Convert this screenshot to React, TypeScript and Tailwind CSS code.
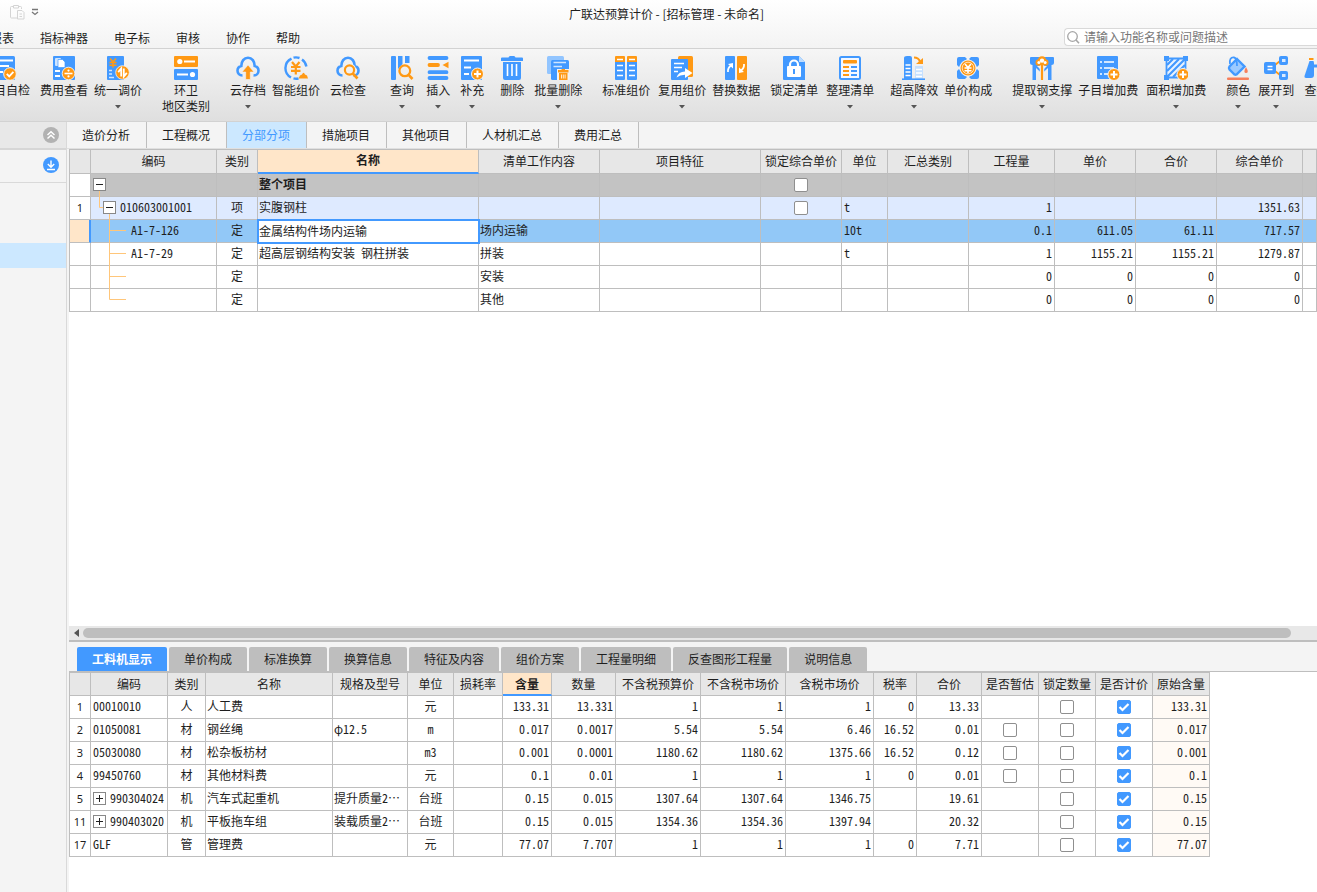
import React from "react";

const BLUE = "#4299ff";
const ORANGE = "#ff9914";

function Svg({ children }: { children: React.ReactNode }) {
  return (
    <svg width="24" height="24" viewBox="0 0 24 24" fill="none" className="shrink-0" aria-hidden="true">
      {children}
    </svg>
  );
}

function Yen({ x, y, color }: { x: number; y: number; color: string }) {
  return (
    <path
      transform={`translate(${x} ${y})`}
      d="M1 0 L4 3.5 L7 0 M4 3.5 V9 M0.5 4 H7.5 M0.5 6.8 H7.5"
      stroke={color}
      strokeWidth="1.6"
    />
  );
}

function PlusBadge({ x, y }: { x: number; y: number }) {
  return (
    <g>
      <circle cx={x} cy={y} r="6" fill={ORANGE} stroke="#f4f4f4" strokeWidth="1" />
      <path d={`M${x - 3.5} ${y}h7M${x} ${y - 3.5}v7`} stroke="#fff" strokeWidth="2" />
    </g>
  );
}

const CLOUD = "M6.5 19.5C3.5 19.5 1.5 17.3 1.5 14.7C1.5 12 3.3 10.4 5.3 10C5.3 5.5 8 1.7 12 1.7C16 1.7 18.7 5.5 18.7 10C20.7 10.4 22.5 12 22.5 14.7C22.5 17.3 20.5 19.5 17.5 19.5";

const icons: Record<string, React.ReactNode> = {
  selfCheck: (
    <Svg>
      <rect x="0" y="0" width="21" height="24" rx="1.5" fill={BLUE} />
      <path d="M3 4.5H19M3 10H15M3 16H9" stroke="#fff" strokeWidth="2" />
      <circle cx="16" cy="18" r="6.3" fill={ORANGE} stroke="#f4f4f4" />
      <path d="M12.8 17.8l2.4 2.6 4.2-4.6" stroke="#fff" strokeWidth="1.8" />
    </Svg>
  ),
  feeView: (
    <Svg>
      <rect x="1" y="0" width="22" height="24" rx="1" fill={BLUE} />
      <rect x="3" y="2" width="6" height="8" rx="1" fill="#cfe5ff" />
      <path d="M6 3.5h4.5l2.5 2.5v5.5H6z" fill="#fff" stroke={BLUE} strokeWidth=".7" />
      <path d="M3 15H8M3 20H8" stroke="#fff" strokeWidth="1.8" />
      <circle cx="16.5" cy="17.5" r="6.3" fill={ORANGE} stroke="#fff" strokeWidth=".8" />
      <path d="M12.5 17.5h8" stroke="#fff" strokeWidth="1.6" />
      <circle cx="16.5" cy="14.6" r="1.1" fill="#fff" />
      <circle cx="16.5" cy="20.4" r="1.1" fill="#fff" />
    </Svg>
  ),
  adjust: (
    <Svg>
      <rect x="1" y="0" width="17" height="24" rx="1" fill={BLUE} />
      <Yen x={3} y={2.5} color={ORANGE} />
      <path d="M3 14.5h3M3 18h3M3 21.5h5" stroke="#cfe5ff" strokeWidth="1.3" />
      <circle cx="16.5" cy="16.5" r="6.8" fill={ORANGE} stroke="#f4f4f4" strokeWidth=".8" />
      <path d="M15.2 20.5v-8l-3 3.6M17.8 12.5v8l3-3.6" stroke="#fff" strokeWidth="1.8" />
    </Svg>
  ),
  region: (
    <Svg>
      <rect width="24" height="11" rx="1" fill={ORANGE} />
      <rect y="13" width="24" height="11" rx="1" fill={BLUE} />
      <circle cx="5.8" cy="5.5" r="2.6" fill="#fff" />
      <path d="M10 5.5H21M3 18.5H14" stroke="#fff" strokeWidth="1.8" />
      <circle cx="18.5" cy="18.5" r="2.6" fill="#fff" />
    </Svg>
  ),
  cloudSave: (
    <Svg>
      <path d={CLOUD} stroke={BLUE} strokeWidth="2.6" />
      <path d="M12 9L18 16H14.3V23.5H9.7V16H6Z" fill={ORANGE} stroke="#f2f2f2" strokeWidth=".6" />
    </Svg>
  ),
  smart: (
    <Svg>
      <path d="M7 21.5A10.6 10.6 0 0 1 7.5 2.6M9.5 1.7A10.6 10.6 0 0 1 15.5 2M18 3.4A10.6 10.6 0 0 1 22.4 10.5M9.5 22.4a10.6 10.6 0 0 0 5 .1" stroke={BLUE} strokeWidth="2.4" />
      <path d="M8 6l3.8 4.500L15.500 6M11.800 10.500v8M7 11h9.500M7 14.800h9.500" stroke={ORANGE} strokeWidth="2.200" />
      <path d="M14.500 22.500L16 19.500 18 18.500Q19.500 15 21 18.500L23 19.500 24 22.500Z" fill={ORANGE} />
    </Svg>
  ),
  cloudCheck: (
    <Svg>
      <path d={CLOUD} stroke={BLUE} strokeWidth="2.6" />
      <circle cx="13.500" cy="14" r="6.600" fill="#f1f1f1" />
      <circle cx="13.500" cy="14" r="4.600" stroke={ORANGE} strokeWidth="2.200" />
      <path d="M16.800 17.500L21.500 22.500" stroke={ORANGE} strokeWidth="2.600" />
    </Svg>
  ),
  query: (
    <Svg>
      <rect x="1" width="5" height="24" rx="1" fill={BLUE} />
      <path d="M8 0h4.500v8L8 13zM15 0h4.500v7H15z" fill={BLUE} />
      <circle cx="14.800" cy="14.800" r="5.400" stroke={ORANGE} strokeWidth="2.300" />
      <path d="M18.600 18.800L22.500 23" stroke={ORANGE} strokeWidth="2.600" />
    </Svg>
  ),
  insert: (
    <Svg>
      <path d="M3.500 2H20.500M3.500 16.200H20.500M3.500 22H20.500" stroke={BLUE} strokeWidth="3.800" strokeLinecap="round" />
      <path d="M3.500 9H12" stroke={ORANGE} strokeWidth="3.800" strokeLinecap="round" />
      <path d="M22.500 5.800V12.200L16.500 9Z" fill={ORANGE} />
    </Svg>
  ),
  supplement: (
    <Svg>
      <rect x="1" width="21" height="24" rx="1" fill={BLUE} />
      <path d="M4 4.500H19M4 11.500H11M4 18H9" stroke="#fff" strokeWidth="1.800" />
      <PlusBadge x={17.5} y={18} />
    </Svg>
  ),
  remove: (
    <Svg>
      <path d="M1 2.500Q1 1.500 2 1.500H8.500Q9 0 10 0H14Q15 0 15.500 1.500H22Q23 1.500 23 2.500V5H1ZM3 6H21V22Q21 24 19 24H5Q3 24 3 22Z" fill={BLUE} />
      <path d="M7.500 8V20M12 8V20M16.500 8V20" stroke="#fff" strokeWidth="1.600" />
    </Svg>
  ),
  batchRemove: (
    <Svg>
      <rect x="1" width="17" height="18" rx="1.500" fill="#92c5ff" />
      <rect x="5" y="4" width="18" height="20" rx="1.500" fill={BLUE} />
      <path d="M7.500 6.500H20M7.500 10.500H16" stroke="#cfe5ff" strokeWidth="1.500" />
      <path d="M11 13H23.500V24H11Z" fill="#f2f2f2" />
      <path d="M12 14H15.500V13H19V14H22.500V16.500H12ZM13 17H21.500V24H13Z" fill={ORANGE} />
      <path d="M15.500 18.500V22.500M17.300 18.500V22.500M19.100 18.500V22.500" stroke="#fff" strokeWidth=".8" />
    </Svg>
  ),
  standard: (
    <Svg>
      <path d="M1 1Q1 0 2 0H10Q11 0 11 1V6H1ZM13 1Q13 0 14 0H22Q23 0 23 1V6H13Z" fill={ORANGE} />
      <path d="M1 6H11V23Q11 24 10 24H2Q1 24 1 23ZM13 6H23V23Q23 24 22 24H14Q13 24 13 23Z" fill={BLUE} />
      <path d="M3 3.500H9M15 3.500H21M3 9.500H9M15 9.500H21M3 14.500H9M15 14.500H21M3 19.500H9M15 19.500H21" stroke="#fff" strokeWidth="1.700" />
    </Svg>
  ),
  reuse: (
    <Svg>
      <rect x="8" width="15" height="21" rx="1.500" fill={ORANGE} />
      <rect x="1" y="3" width="17" height="21" rx="1" fill={BLUE} />
      <path d="M4 7.500H14M4 11.500H12M4 15.500H8" stroke="#fff" strokeWidth="1.600" />
      <path d="M6.500 21.500Q8.500 15.500 15 15.500V12L22.500 17L15 22V18.800Q10 18.800 6.500 21.500Z" fill="#fff" />
    </Svg>
  ),
  replace: (
    <Svg>
      <rect x="1" width="10" height="24" rx="1" fill={BLUE} />
      <rect x="13" width="10" height="24" rx="1" fill={ORANGE} />
      <path d="M4 16Q3.500 12 7 9.500M20 8Q20.500 12 17 14.500" stroke="#fff" strokeWidth="1.800" />
      <path d="M4 8L9 7V12.500ZM20 16L15 17V11.500Z" fill="#fff" />
    </Svg>
  ),
  lock: (
    <Svg>
      <path d="M2 0H17L23 6V24H2Q1 24 1 23V1Q1 0 2 0Z" fill={BLUE} />
      <path d="M17 0L23 6H17Z" fill="#bcdcff" />
      <rect x="5" y="10" width="14" height="11" rx="1" fill="#fff" />
      <path d="M8 11V8.500A4 4 0 0 1 16 8.500V11" stroke="#fff" strokeWidth="2.200" />
      <path d="M12 13V18" stroke={BLUE} strokeWidth="2" />
    </Svg>
  ),
  arrange: (
    <Svg>
      <rect x="2" y="1" width="20" height="22" rx="1.500" fill="#f4f8ff" stroke={BLUE} strokeWidth="2" />
      <rect x="5" y="4" width="14" height="3.500" rx="1" fill={ORANGE} />
      <path d="M5 11H11M5 15H11M5 19H11" stroke={ORANGE} strokeWidth="1.800" />
      <path d="M13 11H19M13 15H19M13 19H19" stroke={BLUE} strokeWidth="1.800" />
    </Svg>
  ),
  highRise: (
    <Svg>
      <path d="M2 2Q2 0 5 0H8Q10 0 10 2V23H2Z" fill={BLUE} />
      <path d="M3.500 9H8.500M3.500 12.500H8.500M3.500 16H8.500M3.500 19.500H8.500" stroke="#fff" strokeWidth="1.500" />
      <rect x="13" y="10" width="8" height="13" fill="#c5e0ff" />
      <path d="M14 13.500H20M14 17H20M14 20.500H20" stroke="#fff" strokeWidth="1.300" />
      <path d="M0 23.200H23" stroke={BLUE} strokeWidth="1.600" />
      <path d="M12 1.500Q16.500 1.500 18 5.500" stroke={ORANGE} strokeWidth="2.200" />
      <path d="M14 8L21 2V8Z" fill={ORANGE} />
    </Svg>
  ),
  unitPrice: (
    <Svg>
      <path d="M1 9V3Q1 1 3 1H9L11 3L3 11ZM15 1H21Q23 1 23 3V9L21 11L13 3ZM23 15V21Q23 23 21 23H15L13 21L21 13ZM9 23H3Q1 23 1 21V15L3 13L11 21Z" fill={BLUE} />
      <circle cx="12" cy="12" r="8.600" fill="#f0f0f0" />
      <circle cx="12" cy="12" r="7.500" fill={ORANGE} />
      <circle cx="12" cy="12" r="5.800" stroke="#fff" strokeWidth=".7" />
      <Yen x={8} y={8} color="#fff" />
    </Svg>
  ),
  steel: (
    <Svg>
      <path d="M0 2Q0 1 1 1H23Q24 1 24 2V7Q24 9 21.500 9V24H18V12L12 17.500L6 12V24H2.500V9Q0 9 0 7Z" fill={BLUE} />
      <path d="M7 10L12 15L17 10Z" fill="#f0f0f0" />
      <path d="M12 9V24" stroke="#f0f0f0" strokeWidth="4.500" />
      <path d="M12 8V24" stroke={ORANGE} strokeWidth="2.200" />
      <circle cx="12" cy="4.200" r="4" fill={ORANGE} />
      <circle cx="8.800" cy="6.500" r="3.300" fill={ORANGE} />
      <circle cx="15.200" cy="6.500" r="3.300" fill={ORANGE} />
      <circle cx="12" cy="4.600" r="2.200" fill="#fff" />
      <circle cx="8.900" cy="6.600" r="1.500" fill="#fff" />
      <circle cx="15.100" cy="6.600" r="1.500" fill="#fff" />
    </Svg>
  ),
  subItem: (
    <Svg>
      <rect x="1" width="21" height="23" rx="1" fill={BLUE} />
      <path d="M4 6H6M8 6H18M4 12H6M8 12H18M4 18H6M8 18H12" stroke="#fff" strokeWidth="1.700" />
      <PlusBadge x={18} y={18.5} />
    </Svg>
  ),
  area: (
    <Svg>
      <path d="M2.500 2.500H21.500V21.500H2.500Z" fill="#e9f3ff" stroke={BLUE} strokeWidth="1.800" />
      <path d="M3 9L9 3M3 15L15 3M3 21L21 3M9 21L21 9M15 21L21 15" stroke={BLUE} strokeWidth="2.200" />
      <path d="M0 0H5V5H0ZM19 0H24V5H19ZM0 19H5V24H0Z" fill={BLUE} />
      <PlusBadge x={19} y={18.5} />
    </Svg>
  ),
  color: (
    <Svg>
      <path d="M11 3L18.500 10.500L10.500 18.500Q9.500 19 8.500 18.500L3.500 13.500Q2.500 12 3.500 10.500Z" fill="#9ccaff" stroke={BLUE} strokeWidth="2.400" />
      <path d="M4 8Q3 1 8 1.500Q11 2 11 10" stroke={BLUE} strokeWidth="1.800" />
      <path d="M20 11Q23.500 17 20 17Q16.800 17 20 11Z" fill="#f77f5b" />
      <rect x="1" y="21.500" width="22" height="2.500" rx="1" fill="#f77f5b" />
    </Svg>
  ),
  expand: (
    <Svg>
      <path d="M11 9L16 5M11 15L16 19" stroke={ORANGE} strokeWidth="1.800" />
      <rect x="0" y="6" width="12" height="12" rx="2" fill={BLUE} />
      <path d="M3.500 10.500H8.500M3.500 13.500H8.500" stroke="#fff" strokeWidth="1.300" />
      <rect x="15" y="0" width="9" height="9" rx="2" fill={BLUE} />
      <rect x="15" y="15" width="9" height="9" rx="2" fill={BLUE} />
      <rect x="18" y="3" width="3.500" height="3" fill="#d9eaff" />
      <rect x="18" y="18" width="3.500" height="3" fill="#d9eaff" />
    </Svg>
  ),
  find: (
    <Svg>
      <path d="M5.500 5H9.500L10 7V19Q10 22 7 22H2Q0 22 .5 20Z" fill={BLUE} />
      <path d="M18.500 5H14.500L14 7V19Q14 22 17 22H22Q24 22 23.500 20Z" fill={BLUE} />
      <path d="M5 3H9.500M14.500 3H19" stroke={ORANGE} strokeWidth="2" />
      <path d="M10 10H14" stroke={BLUE} strokeWidth="3" />
    </Svg>
  ),
};

type Tool = { icon: string; label: string; gap: string; second?: string; menu?: boolean };

const tools: Tool[] = [
  { icon: "selfCheck", label: "项目自检", gap: "-ml-[18px]" },
  { icon: "feeView", label: "费用查看", gap: "ml-2.5" },
  { icon: "adjust", label: "统一调价", gap: "ml-1.5", menu: true },
  { icon: "region", label: "环卫", second: "地区类别", gap: "ml-5" },
  { icon: "cloudSave", label: "云存档", gap: "ml-5", menu: true },
  { icon: "smart", label: "智能组价", gap: "ml-1.5" },
  { icon: "cloudCheck", label: "云检查", gap: "ml-2.5" },
  { icon: "query", label: "查询", gap: "ml-6", menu: true },
  { icon: "insert", label: "插入", gap: "ml-3", menu: true },
  { icon: "supplement", label: "补充", gap: "ml-2.5", menu: true },
  { icon: "remove", label: "删除", gap: "ml-4" },
  { icon: "batchRemove", label: "批量删除", gap: "ml-2.5", menu: true },
  { icon: "standard", label: "标准组价", gap: "ml-5" },
  { icon: "reuse", label: "复用组价", gap: "ml-2", menu: true },
  { icon: "replace", label: "替换数据", gap: "ml-1.5" },
  { icon: "lock", label: "锁定清单", gap: "ml-2.5" },
  { icon: "arrange", label: "整理清单", gap: "ml-2", menu: true },
  { icon: "highRise", label: "超高降效", gap: "ml-4", menu: true },
  { icon: "unitPrice", label: "单价构成", gap: "ml-1.5" },
  { icon: "steel", label: "提取钢支撑", gap: "ml-5", menu: true },
  { icon: "subItem", label: "子目增加费", gap: "ml-1.5" },
  { icon: "area", label: "面积增加费", gap: "ml-2", menu: true },
  { icon: "color", label: "颜色", gap: "ml-5", menu: true },
  { icon: "expand", label: "展开到", gap: "ml-2", menu: true },
  { icon: "find", label: "查找", gap: "ml-2.5" },
];

function ToolButton({ tool }: { tool: Tool }) {
  return (
    <button type="button" className={`flex shrink-0 flex-col items-center ${tool.gap}`}>
      {icons[tool.icon]}
      <span className="mt-0.5 text-xs leading-4 whitespace-nowrap">{tool.label}</span>
      {tool.second && <span className="text-xs leading-4 whitespace-nowrap">{tool.second}</span>}
      {tool.menu && (
        <svg width="6" height="4" viewBox="0 0 6 4" className="mt-[7px]" aria-hidden="true">
          <path d="M0 0H6L3 3.5Z" fill="#555" />
        </svg>
      )}
    </button>
  );
}

const MONO = "font-['Noto_Sans_Mono_CJK_SC','Liberation_Mono','Noto_Sans_CJK_SC',monospace]";
const LINE = "border-[#bebebe]";
const BOX = `h-[23px] border-r border-b ${LINE}`;
const CELL = `${BOX} overflow-hidden p-0 pb-0.5 whitespace-nowrap`;
const CHECK_CELL = `${BOX} p-0`;
const ROW_NO = "text-center text-[11px] font-['Noto_Sans',sans-serif]";

function Check({ label, checked = false }: { label: string; checked?: boolean }) {
  return (
    <span className="relative mx-auto block h-3.5 w-3.5">
      <input
        type="checkbox"
        aria-label={label}
        defaultChecked={checked}
        className="peer block h-3.5 w-3.5 appearance-none rounded-xs border border-[#8f8f8f] bg-white checked:border-[#4299ff] checked:bg-[#4299ff]"
      />
      <svg
        width="14"
        height="14"
        viewBox="0 0 14 14"
        fill="none"
        className="pointer-events-none absolute inset-0 hidden peer-checked:block"
        aria-hidden="true"
      >
        <path d="M2.5 7L5.5 10L11.5 4" stroke="#fff" strokeWidth="2.2" />
      </svg>
    </span>
  );
}

function Toggle({ open, label }: { open: boolean; label: string }) {
  return (
    <button
      type="button"
      aria-label={label}
      className="relative z-10 h-[13px] w-[13px] shrink-0 border border-[#888] bg-white"
    >
      <svg width="11" height="11" viewBox="0 0 11 11" aria-hidden="true" className="block">
        <path d={open ? "M2 5.5H9" : "M2 5.5H9M5.5 2V9"} stroke="#222" strokeWidth="1" />
      </svg>
    </button>
  );
}

const branches: Record<string, string> = {
  root: "M8.5 17V23",
  item: "M8.5 0V10.5H13M18.5 17V23",
  tee: "M18.5 0V23M18.5 10.5H35",
  end: "M18.5 0V10.5H35",
};

function Branch({ kind }: { kind: string }) {
  return (
    <svg
      width="36"
      height="23"
      viewBox="0 0 36 23"
      fill="none"
      className="pointer-events-none absolute top-0 left-0 z-10"
      aria-hidden="true"
    >
      <path d={branches[kind]} stroke="#ffc67a" />
    </svg>
  );
}

type BillRow = {
  no: string;
  code: string;
  kind: string;
  name: string;
  work: string;
  lock: boolean;
  unit: string;
  nums: string[];
  branch: string;
  tone: string;
};

const billRows: BillRow[] = [
  { no: "", code: "", kind: "", name: "整个项目", work: "", lock: true, unit: "", nums: ["", "", "", ""], branch: "root", tone: "bg-[#c3c3c3]" },
  { no: "1", code: "010603001001", kind: "项", name: "实腹钢柱", work: "", lock: true, unit: "t", nums: ["1", "", "", "1351.63"], branch: "item", tone: "bg-[#deeaff]" },
  { no: "", code: "A1-7-126", kind: "定", name: "金属结构件场内运输", work: "场内运输", lock: false, unit: "10t", nums: ["0.1", "611.05", "61.11", "717.57"], branch: "tee", tone: "bg-[#92c8f7]" },
  { no: "", code: "A1-7-29", kind: "定", name: "超高层钢结构安装 钢柱拼装", work: "拼装", lock: false, unit: "t", nums: ["1", "1155.21", "1155.21", "1279.87"], branch: "tee", tone: "bg-white" },
  { no: "", code: "", kind: "定", name: "", work: "安装", lock: false, unit: "", nums: ["0", "0", "0", "0"], branch: "tee", tone: "bg-white" },
  { no: "", code: "", kind: "定", name: "", work: "其他", lock: false, unit: "", nums: ["0", "0", "0", "0"], branch: "end", tone: "bg-white" },
];

const billHeads = ["", "编码", "类别", "名称", "清单工作内容", "项目特征", "锁定综合单价", "单位", "汇总类别", "工程量", "单价", "合价", "综合单价", ""];

function BillTable() {
  return (
    <table className={`w-full table-fixed border-separate border-spacing-0 border-t border-l text-xs leading-4 ${LINE} ${MONO}`}>
      <colgroup>
        <col className="w-[21px]" />
        <col className="w-[126px]" />
        <col className="w-[41px]" />
        <col className="w-[221px]" />
        <col className="w-[121px]" />
        <col className="w-[161px]" />
        <col className="w-[81px]" />
        <col className="w-[46px]" />
        <col className="w-[81px]" />
        <col className="w-[86px]" />
        <col className="w-[81px]" />
        <col className="w-[81px]" />
        <col className="w-[86px]" />
        <col />
      </colgroup>
      <thead>
        <tr>
          {billHeads.map((h, i) => (
            <th
              key={i}
              scope="col"
              className={
                i === 3
                  ? "h-6 border-r border-b-2 border-r-[#bebebe] border-b-[#4299ff] bg-[#ffe6c9] p-0 pb-0.5 font-bold"
                  : `h-6 border-r border-b bg-[#e7e7e7] p-0 pb-0.5 font-normal whitespace-nowrap ${LINE}`
              }
            >
              {h}
            </th>
          ))}
        </tr>
      </thead>
      <tbody>
        {billRows.map((r, i) => {
          const editing = i === 2;
          const base = `${CELL} ${r.tone}`;
          return (
            <tr key={i}>
              <td
                className={
                  editing
                    ? "h-[23px] border-r-2 border-b border-r-[#4299ff] border-b-[#bebebe] bg-[#ffe6c9] p-0"
                    : `${CHECK_CELL} bg-white ${ROW_NO}`
                }
              >
                {r.no}
              </td>
              <td className={`relative p-0 pb-0.5 ${BOX} ${r.tone}`}>
                <Branch kind={r.branch} />
                {i === 0 && (
                  <div className="flex items-center pl-0.5">
                    <Toggle open label="折叠整个项目" />
                  </div>
                )}
                {i === 1 && (
                  <div className="flex items-center gap-1 pl-3">
                    <Toggle open label="折叠清单" />
                    {r.code}
                  </div>
                )}
                {i > 1 && <div className="pl-10">{r.code}</div>}
              </td>
              <td className={`${base} text-center`}>{r.kind}</td>
              {editing ? (
                <td className={`p-0 outline-2 -outline-offset-1 outline-[#4299ff] ${BOX}`}>
                  <input
                    aria-label="名称"
                    defaultValue={r.name}
                    className="block h-[22px] w-full bg-white pb-0.5 pl-px text-xs outline-none"
                  />
                </td>
              ) : (
                <td className={`${base} ${i === 0 ? "font-bold" : ""}`}>
                  <span className="pl-px">{r.name}</span>
                </td>
              )}
              <td className={base}>
                <span className="pl-px">{r.work}</span>
              </td>
              <td className={base} />
              <td className={`${CHECK_CELL} ${r.tone}`}>{r.lock && <Check label="锁定综合单价" />}</td>
              <td className={base}>
                <span className="pl-0.5">{r.unit}</span>
              </td>
              <td className={base} />
              {r.nums.map((n, k) => (
                <td key={k} className={`${base} text-right`}>
                  <span className="pr-0.5">{n}</span>
                </td>
              ))}
              <td className={base} />
            </tr>
          );
        })}
      </tbody>
    </table>
  );
}

type ResRow = {
  no: string;
  code: string;
  group?: boolean;
  kind: string;
  name: string;
  spec: string;
  unit: string;
  nums: string[];
  estimate: boolean;
  origin: string;
};

const resRows: ResRow[] = [
  { no: "1", code: "00010010", kind: "人", name: "人工费", spec: "", unit: "元", nums: ["133.31", "13.331", "1", "1", "1", "0", "13.33"], estimate: false, origin: "133.31" },
  { no: "2", code: "01050081", kind: "材", name: "钢丝绳", spec: "φ12.5", unit: "m", nums: ["0.017", "0.0017", "5.54", "5.54", "6.46", "16.52", "0.01"], estimate: true, origin: "0.017" },
  { no: "3", code: "05030080", kind: "材", name: "松杂板枋材", spec: "", unit: "m3", nums: ["0.001", "0.0001", "1180.62", "1180.62", "1375.66", "16.52", "0.12"], estimate: true, origin: "0.001" },
  { no: "4", code: "99450760", kind: "材", name: "其他材料费", spec: "", unit: "元", nums: ["0.1", "0.01", "1", "1", "1", "0", "0.01"], estimate: true, origin: "0.1" },
  { no: "5", code: "990304024", group: true, kind: "机", name: "汽车式起重机", spec: "提升质量2⋯", unit: "台班", nums: ["0.15", "0.015", "1307.64", "1307.64", "1346.75", "", "19.61"], estimate: false, origin: "0.15" },
  { no: "11", code: "990403020", group: true, kind: "机", name: "平板拖车组", spec: "装载质量2⋯", unit: "台班", nums: ["0.15", "0.015", "1354.36", "1354.36", "1397.94", "", "20.32"], estimate: false, origin: "0.15" },
  { no: "17", code: "GLF", kind: "管", name: "管理费", spec: "", unit: "元", nums: ["77.07", "7.707", "1", "1", "1", "0", "7.71"], estimate: false, origin: "77.07" },
];

const resHeads = ["", "编码", "类别", "名称", "规格及型号", "单位", "损耗率", "含量", "数量", "不含税预算价", "不含税市场价", "含税市场价", "税率", "合价", "是否暂估", "锁定数量", "是否计价", "原始含量"];

function ResourceTable() {
  return (
    <table className={`w-[1141px] table-fixed border-separate border-spacing-0 border-t border-l text-xs leading-4 ${LINE} ${MONO}`}>
      <colgroup>
        <col className="w-[21px]" />
        <col className="w-[77px]" />
        <col className="w-[38px]" />
        <col className="w-[127px]" />
        <col className="w-[75px]" />
        <col className="w-[46px]" />
        <col className="w-[49px]" />
        <col className="w-[49px]" />
        <col className="w-[64px]" />
        <col className="w-[85px]" />
        <col className="w-[85px]" />
        <col className="w-[88px]" />
        <col className="w-[43px]" />
        <col className="w-[65px]" />
        <col className="w-[57px]" />
        <col className="w-[57px]" />
        <col className="w-[57px]" />
        <col className="w-[57px]" />
      </colgroup>
      <thead>
        <tr>
          {resHeads.map((h, i) => (
            <th
              key={i}
              scope="col"
              className={
                i === 7
                  ? "h-[23px] border-r border-b-2 border-r-[#bebebe] border-b-[#4299ff] bg-[#ffe6c9] p-0 font-bold"
                  : `h-[23px] border-r border-b bg-[#e7e7e7] p-0 font-normal whitespace-nowrap ${LINE}`
              }
            >
              {h}
            </th>
          ))}
        </tr>
      </thead>
      <tbody>
        {resRows.map((r) => (
          <tr key={r.no}>
            <td className={`${CHECK_CELL} ${ROW_NO}`}>{r.no}</td>
            <td className={CELL}>
              <div className="flex items-center gap-1 pl-0.5">
                {r.group && <Toggle open={false} label={`展开 ${r.code}`} />}
                {r.code}
              </div>
            </td>
            <td className={`${CELL} text-center`}>{r.kind}</td>
            <td className={CELL}>
              <span className="pl-px">{r.name}</span>
            </td>
            <td className={CELL}>
              <span className="pl-px">{r.spec}</span>
            </td>
            <td className={`${CELL} text-center`}>{r.unit}</td>
            <td className={CELL} />
            {r.nums.map((n, k) => (
              <td key={k} className={`${CELL} text-right`}>
                <span className="pr-0.5">{n}</span>
              </td>
            ))}
            <td className={CHECK_CELL}>{r.estimate && <Check label="是否暂估" />}</td>
            <td className={CHECK_CELL}>
              <Check label="锁定数量" />
            </td>
            <td className={CHECK_CELL}>
              <Check label="是否计价" checked />
            </td>
            <td className={`${CELL} bg-[#fffaf5] text-right`}>
              <span className="pr-0.5">{r.origin}</span>
            </td>
          </tr>
        ))}
      </tbody>
    </table>
  );
}

const menus = ["报表", "指标神器", "电子标", "审核", "协作", "帮助"];
const mainTabs = ["造价分析", "工程概况", "分部分项", "措施项目", "其他项目", "人材机汇总", "费用汇总"];
const detailTabs = ["工料机显示", "单价构成", "标准换算", "换算信息", "特征及内容", "组价方案", "工程量明细", "反查图形工程量", "说明信息"];

export default function App() {
  return (
    <div className="flex h-screen min-h-[640px] flex-col overflow-hidden bg-white font-['Noto_Sans_CJK_SC',sans-serif] text-xs text-[#1e1e1e]">
      <header className="shrink-0">
        <div className="bg-linear-to-b from-white to-[#f3f3f3]">
          <div className="flex h-7 items-center">
            <div className="flex w-10 items-center gap-1.5 pb-1 pl-2.5">
              <svg width="15" height="16" viewBox="0 0 15 16" fill="none" className="shrink-0" aria-hidden="true">
                <path d="M7 14H1.500Q.5 14 .5 13V3.500Q.5 2.500 1.500 2.500H3.500M8.500 2.500H10.500Q11.500 2.500 11.500 3.500V5M3.500 1.500H8.500V4H3.500ZM7.500 6.500H12L14 8.500V15H7.500ZM9.500 10H12M9.500 12.500H12" stroke="#d4d4d4" />
              </svg>
              <svg width="8" height="8" viewBox="0 0 8 8" fill="none" className="shrink-0" aria-hidden="true">
                <path d="M1 1.500H7M1 4L4 6.500L7 4" stroke="#777" strokeWidth="1.300" />
              </svg>
            </div>
            <h1 className="flex-1 pr-6 text-center text-xs">广联达预算计价 - [招标管理 - 未命名]</h1>
          </div>
          <div className="flex h-5 items-center justify-between">
            <nav className="-ml-2.5 flex gap-[26px]">
              {menus.map((m) => (
                <button key={m} type="button" className="text-xs leading-5 whitespace-nowrap">
                  {m}
                </button>
              ))}
            </nav>
            <label className="-mt-0.5 flex h-[18px] w-[253px] items-center gap-1 rounded-l-sm border border-r-0 border-[#d9d9d9] bg-white pl-0.5">
              <svg width="13" height="13" viewBox="0 0 13 13" fill="none" className="shrink-0" aria-hidden="true">
                <circle cx="5.5" cy="5.5" r="4.8" stroke="#a6a6a6" strokeWidth="1.3" />
                <path d="M9 9L12 12.3" stroke="#a6a6a6" strokeWidth="1.6" />
              </svg>
              <input
                type="text"
                aria-label="搜索功能"
                placeholder="请输入功能名称或问题描述"
                className="h-4 min-w-0 flex-1 bg-transparent text-xs leading-4 outline-none placeholder:text-[#777]"
              />
            </label>
          </div>
        </div>
        <div className="flex h-[74px] items-start overflow-hidden border-y border-[#d2d2d2] bg-linear-to-b from-[#f6f6f6] to-[#dfdfdf] pt-[7px]">
          {tools.map((t) => (
            <ToolButton key={t.label} tool={t} />
          ))}
        </div>
      </header>

      <div className="flex min-h-0 flex-1">
        <aside className="flex w-[67px] shrink-0 flex-col border-r border-[#d9d9d9] bg-[#f4f4f4]">
          <div className="flex h-7 items-center justify-end border-b-2 border-[#d6d6d6] bg-[#e8e8e8] pr-[7px]">
            <button type="button" aria-label="收起">
              <svg width="16" height="16" viewBox="0 0 16 16" fill="none" className="block">
                <circle cx="8" cy="8" r="8" fill="#b2b2b2" />
                <path d="M4.500 8L8 4.800L11.500 8M4.500 11.500L8 8.300L11.500 11.500" stroke="#fff" strokeWidth="1.500" />
              </svg>
            </button>
          </div>
          <div className="flex h-[33px] items-center justify-end border-b border-[#d9d9d9] pr-[7px] pb-0.5">
            <button type="button" aria-label="下载">
              <svg width="16" height="16" viewBox="0 0 16 16" fill="none" className="block">
                <circle cx="8" cy="8" r="8" fill="#4299ff" />
                <path d="M8 3.500V10M4.800 7L8 10.200L11.200 7M4 12.500H12" stroke="#fff" strokeWidth="1.400" />
              </svg>
            </button>
          </div>
          <div className="mt-[60px] h-[25px] bg-[#cce8ff]" />
        </aside>

        <main className="flex min-w-0 flex-1 flex-col">
          <div className="flex h-[27px] shrink-0 border-b border-[#e0e0e0] bg-[#f4f4f4]">
            {mainTabs.map((t) => (
              <button
                key={t}
                type="button"
                className={
                  t === "分部分项"
                    ? "border-r border-[#bebebe] bg-[#cce8ff] pr-4 pl-[15px] text-xs whitespace-nowrap text-[#4299ff]"
                    : "border-r border-[#bebebe] pr-4 pl-[15px] text-xs whitespace-nowrap"
                }
              >
                {t}
              </button>
            ))}
          </div>

          <div className="flex min-h-0 flex-1 flex-col border-l-2 border-[#f4f4f4]">
            <section className="min-h-0 flex-1 overflow-hidden">
              <BillTable />
            </section>

            <div className="flex h-3.5 shrink-0 items-center bg-[#e8e8e8] pr-[26px]">
              <button type="button" aria-label="向左滚动" className="flex w-3.5 justify-center">
                <svg width="5" height="8" viewBox="0 0 5 8">
                  <path d="M5 0V8L0 4Z" fill="#555" />
                </svg>
              </button>
              <div className="h-2.5 flex-1 rounded-full bg-[#bebebe]" />
            </div>

            <section className="shrink-0 overflow-hidden border-t-2 border-[#bebebe] bg-white pb-[35px]">
              <div className="flex h-[30px] items-end gap-0.5 border-b border-[#bebebe] bg-[#f4f4f4] pl-2">
                {detailTabs.map((t, i) => (
                  <button
                    key={t}
                    type="button"
                    className={
                      i === 0
                        ? "h-6 rounded-t-xs bg-[#4299ff] px-[15px] text-xs font-bold whitespace-nowrap text-white"
                        : "h-6 rounded-t-xs bg-[#bebebe] px-[15px] text-xs whitespace-nowrap"
                    }
                  >
                    {t}
                  </button>
                ))}
              </div>
              <ResourceTable />
            </section>
          </div>
        </main>
      </div>
    </div>
  );
}
